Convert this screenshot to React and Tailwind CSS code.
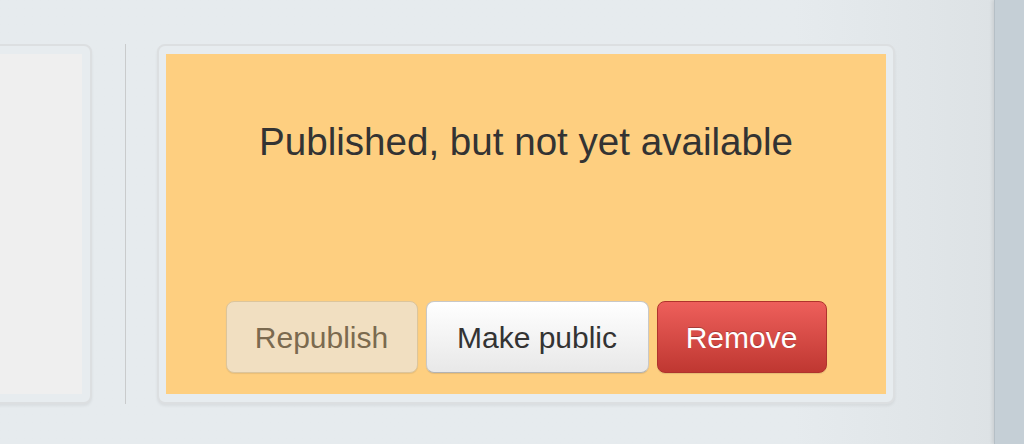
import React from "react";

const font = { fontFamily: '"Liberation Sans", Arial, sans-serif' };

const Card = ({ className = "", innerClass = "", children }) => (
    <div
        className={`rounded-[8px] border-2 border-[#dcdfe1] bg-[#e7ecef] py-[8px] shadow-[0_2px_3px_rgba(0,0,0,0.06)] ${className}`}
    >
        <div className={`h-full ${innerClass}`}>{children}</div>
    </div>
);

const App = () => {
    return (
        <div className="flex h-[444px] w-[1024px] overflow-hidden" style={font}>
            <div className="flex flex-1 items-start bg-gradient-to-r from-[#e6ebee] from-80% to-[#dde2e5] pt-[44px]">
                <Card className="ml-[-58px] h-[360px] w-[150px] shrink-0 px-[8px]" innerClass="bg-[#efefef]" />

                <div className="ml-[33px] mr-[31px] h-[360px] w-px shrink-0 bg-[#c9cbcc]" />

                <Card className="h-[360px] w-[738px] shrink-0 px-[7px]" innerClass="flex flex-col bg-[#fecf80]">
                    <h2 className="pt-[66px] text-center text-[38.6px] leading-[44px] font-normal text-[#333333]">
                        Published, but not yet available
                    </h2>
                    <div className="mt-auto mb-[21px] flex justify-center gap-2">
                        <button className="h-[72px] w-[192px] rounded-[8px] border border-[#dcc59c] bg-[#f1dfc1] text-[30px] text-[#7b6a4f] shadow-[0_1px_1px_rgba(0,0,0,0.08)]">
                            Republish
                        </button>
                        <button className="h-[72px] w-[223px] rounded-[8px] border border-[#c8c8c8] border-b-[#b3b3b3] bg-gradient-to-b from-white to-[#e8e8e8] text-[30px] text-[#333333] shadow-[0_1px_1px_rgba(0,0,0,0.1)]">
                            Make public
                        </button>
                        <button className="h-[72px] w-[170px] rounded-[8px] border border-[#b0332d] bg-gradient-to-b from-[#ee5f5b] to-[#bf3731] text-[30px] text-white shadow-[0_1px_1px_rgba(0,0,0,0.1)] [text-shadow:0_-1px_0_rgba(0,0,0,0.25)]">
                            Remove
                        </button>
                    </div>
                </Card>
            </div>
            <div className="w-[30px] shrink-0 border-l border-[#b5bfc6] bg-[#c5cfd6] shadow-[-2px_0_3px_rgba(0,0,0,0.08)]" />
        </div>
    );
};

export default App;
